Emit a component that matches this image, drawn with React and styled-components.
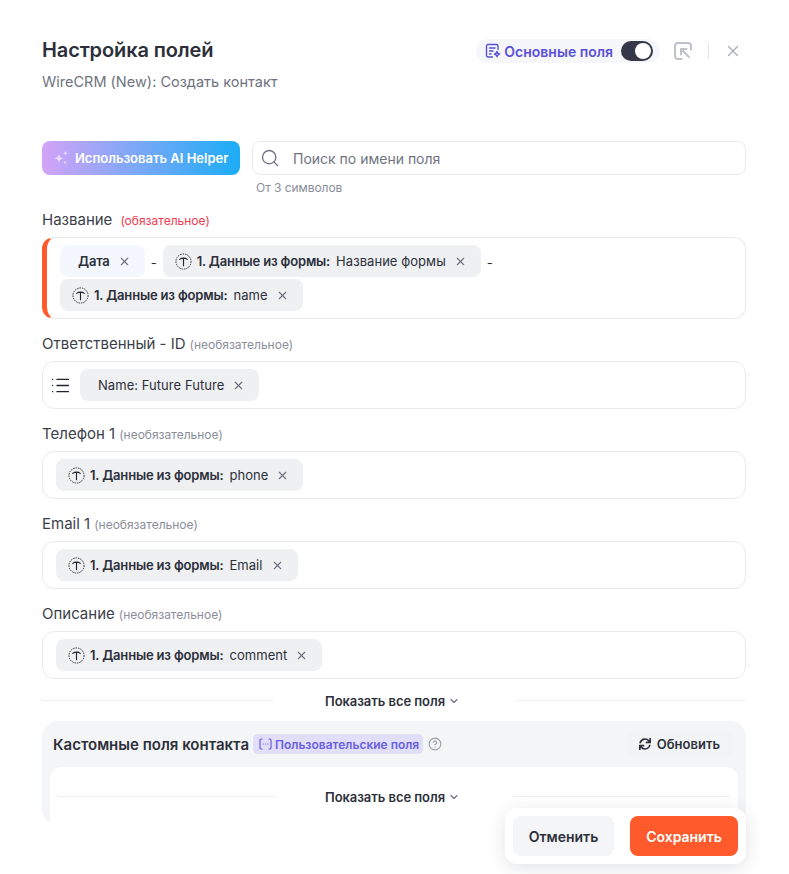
import styled, { createGlobalStyle } from "styled-components";
import { X, Search, List, ChevronDown, CircleHelp } from "lucide-react";
import { FaSync } from "react-icons/fa";

const GlobalStyle = createGlobalStyle`
  html, body {
    margin: 0;
    padding: 0;
    background: #fff;
    font-family: Inter, "Noto Sans", sans-serif;
    color: #2c2f3a;
  }
  * { box-sizing: border-box; }
`;

const FormIcon = () => (
  <svg width="17" height="17" viewBox="0 0 18 18" fill="none" stroke="#22252e">
    <circle cx="9" cy="9" r="8" strokeWidth="1" strokeDasharray="1.6 1" />
    <path d="M5 6.800c1.200-1 2.600-1.400 4-1.400s2.800.4 4 1.400M9 5.400V13.500" strokeWidth="1.200" strokeLinecap="round" />
  </svg>
);

const Chip = ({ title, value, light, icon = true }) => (
  <ChipBox $light={light} $icon={icon}>
    {icon && <FormIcon />}
    {title && <ChipTitle>{title}</ChipTitle>}
    {value && <ChipValue>{value}</ChipValue>}
    <ChipClose><X size={13} strokeWidth={2} /></ChipClose>
  </ChipBox>
);

const Field = ({ label, note, required, children }) => (
  <FieldWrap>
    <Label>
      {label}
      <Note $required={required}>{note}</Note>
    </Label>
    <FieldBox $required={required}>{children}</FieldBox>
  </FieldWrap>
);

const ShowAll = ({ inner }) => (
  <Divider $inner={inner}>
    <DividerLine />
    <DividerText $inner={inner}>Показать все поля <ChevronDown size={12} strokeWidth={2.2} color="#6b7080" /></DividerText>
    <DividerLine />
  </Divider>
);

export default function App() {
  return (
    <Page>
      <GlobalStyle />
      <Header>
        <div>
          <Title>Настройка полей</Title>
          <Subtitle>WireCRM (New): Создать контакт</Subtitle>
        </div>
        <HeaderActions>
          <ModePill>
            <svg width="16" height="16" viewBox="0 0 16 16" fill="none" stroke="#5a50d8" strokeWidth="1.400" strokeLinecap="round" strokeLinejoin="round">
              <path d="M7.500 14H3a1.500 1.500 0 0 1-1.500-1.500V3A1.500 1.500 0 0 1 3 1.500h8.500A1.500 1.500 0 0 1 13 3v3.500" />
              <path d="M4.500 5h5.500M4.500 8h3.500M4.500 11h1.500" />
              <path d="M12 8.500c.3 1.600 1 2.300 2.600 2.600-1.600.3-2.300 1-2.600 2.600-.3-1.600-1-2.300-2.600-2.600 1.600-.3 2.300-1 2.600-2.600z" />
            </svg>
            Основные поля
            <Toggle><Knob /></Toggle>
          </ModePill>
          <IconSlot>
            <svg width="20" height="20" viewBox="0 0 20 20" fill="none" stroke="#bfc2cc" strokeWidth="2" strokeLinecap="round" strokeLinejoin="round">
              <path d="M8.500 18H5a3 3 0 0 1-3-3V5a3 3 0 0 1 3-3h10a3 3 0 0 1 3 3v3.500" />
              <path d="M16 16L8 8M8 13.500V8h5.500" />
            </svg>
          </IconSlot>
          <HeaderSep />
          <X size={18} strokeWidth={1.6} color="#a9adb8" />
        </HeaderActions>
      </Header>

      <SearchRow>
        <AiButton>
          <svg width="16" height="16" viewBox="0 0 16 16" fill="#e9ddff">
            <path d="M6 3.500c.5 3 1.500 4 4.800 4.800C7.500 9 6.500 10 6 13.500 5.500 10 4.500 9 1 8.300 4.500 7.500 5.500 6.500 6 3.500z" />
            <path d="M12.500 .8c.2 1.500.8 2.100 2.500 2.400-1.700.3-2.300.9-2.500 2.400-.2-1.500-.8-2.100-2.500-2.400 1.700-.3 2.300-.9 2.500-2.400z" />
            <path d="M12 10.500c.2 1.300.7 1.800 2 2-1.300.2-1.800.7-2 2-.2-1.300-.7-1.800-2-2 1.300-.2 1.800-.7 2-2z" />
          </svg>
          Использовать AI Helper
        </AiButton>
        <SearchColumn>
          <SearchBox>
            <Search size={20} strokeWidth={1.6} color="#6b7080" />
            <SearchInput placeholder="Поиск по имени поля" />
          </SearchBox>
          <Hint>От 3 символов</Hint>
        </SearchColumn>
      </SearchRow>

      <Field label="Название" note="(обязательное)" required>
        <Chip title="Дата" light icon={false} />
        <Dash>-</Dash>
        <Chip title="1. Данные из формы:" value="Название формы" />
        <Dash>-</Dash>
        <Chip title="1. Данные из формы:" value="name" />
      </Field>
      <Field label="Ответственный - ID" note="(необязательное)">
        <ListIcon><List size={21} strokeWidth={1.6} color="#22252e" /></ListIcon>
        <Chip value="Name: Future Future" icon={false} />
      </Field>
      <Field label="Телефон 1" note="(необязательное)">
        <Chip title="1. Данные из формы:" value="phone" />
      </Field>
      <Field label="Email 1" note="(необязательное)">
        <Chip title="1. Данные из формы:" value="Email" />
      </Field>
      <Field label="Описание" note="(необязательное)">
        <Chip title="1. Данные из формы:" value="comment" />
      </Field>

      <ShowAll />

      <CustomPanel>
        <CustomHeader>
          <CustomTitle>Кастомные поля контакта</CustomTitle>
          <CustomBadge>
            <svg width="13" height="12" viewBox="0 0 13 12" fill="none" stroke="#6a5fe0" strokeWidth="1.200" strokeLinecap="round">
              <path d="M3 1H2.300C1.600 1 1 1.600 1 2.300v7.400C1 10.400 1.600 11 2.300 11H3M10 1h.7c.7 0 1.300.6 1.300 1.300v7.400c0 .7-.6 1.300-1.300 1.300H10" />
              <path d="M4.200 6h.1M6.500 6h.1M8.800 6h.1" />
            </svg>
            Пользовательские поля
          </CustomBadge>
          <CircleHelp size={14} strokeWidth={2} color="#9a9ea9" />
          <RefreshButton><FaSync size={12} />Обновить</RefreshButton>
        </CustomHeader>
        <CustomBody>
          <ShowAll inner />
        </CustomBody>
      </CustomPanel>

      <Footer>
        <CancelButton>Отменить</CancelButton>
        <SaveButton>Сохранить</SaveButton>
      </Footer>
    </Page>
  );
}

const Page = styled.div`
  position: relative;
  width: 789px;
  height: 874px;
  overflow: hidden;
  padding: 38px 43px 0 42px;
`;

const Header = styled.div`
  display: flex;
  justify-content: space-between;
  align-items: flex-start;
  height: 103px;
`;

const Title = styled.div`
  font-size: 20px;
  font-weight: 600;
  line-height: 24px;
  letter-spacing: -0.13px;
  color: #2c2f3a;
`;

const Subtitle = styled.div`
  margin-top: 11px;
  font-size: 14.5px;
  line-height: 17px;
  color: #6f7380;
`;

const HeaderActions = styled.div`
  display: flex;
  align-items: center;
  margin-top: 1px;
  margin-right: 4px;
`;

const ModePill = styled.div`
  display: flex;
  align-items: center;
  gap: 3px;
  height: 24px;
  padding: 0 7px 0 9px;
  border-radius: 12px;
  background: #f6f7fb;
  font-size: 14px;
  font-weight: 600;
  color: #5a50d8;
`;

const Toggle = styled.div`
  display: flex;
  justify-content: flex-end;
  align-items: center;
  width: 32px;
  height: 20px;
  margin-left: 5px;
  padding: 2px;
  border-radius: 10px;
  background: #343849;
`;

const Knob = styled.div`
  width: 16px;
  height: 16px;
  border-radius: 50%;
  background: #fff;
`;

const IconSlot = styled.div`
  display: flex;
  margin-left: 13px;
`;

const HeaderSep = styled.div`
  width: 1px;
  height: 16px;
  margin: 0 15px;
  background: #e4e5ea;
`;

const SearchRow = styled.div`
  display: flex;
  gap: 12px;
`;

const AiButton = styled.button`
  display: flex;
  align-items: center;
  gap: 6px;
  width: 198px;
  height: 34px;
  padding: 0 0 0 11px;
  border: 0;
  border-radius: 8px;
  background: linear-gradient(90deg, #d3a3f8, #1badf6);
  color: #fff;
  font-family: inherit;
  font-size: 13px;
  font-weight: 600;
`;

const SearchColumn = styled.div`
  flex: 1;
`;

const SearchBox = styled.div`
  display: flex;
  align-items: center;
  gap: 13px;
  height: 34px;
  padding: 0 7px;
  border: 1px solid #e8e9ed;
  border-radius: 8px;
`;

const SearchInput = styled.input`
  flex: 1;
  border: 0;
  outline: 0;
  padding: 0;
  font-family: inherit;
  font-size: 14px;
  color: #2c2f3a;
  &::placeholder { color: #6f7380; opacity: 1; }
`;

const Hint = styled.div`
  margin: 5px 0 0 4px;
  font-size: 12px;
  line-height: 15px;
  letter-spacing: -0.05px;
  color: #8a8e9a;
`;

const FieldWrap = styled.div`
  margin-top: 16px;
`;

const Label = styled.div`
  display: flex;
  align-items: baseline;
  gap: 4px;
  height: 18px;
  margin-bottom: 8px;
  font-size: 15px;
  line-height: 18px;
  color: #3c3f4a;
`;

const Note = styled.span`
  font-size: 12px;
  margin-left: ${(p) => (p.$required ? "4px" : "0")};
  color: ${(p) => (p.$required ? "#f0384e" : "#8a8e9a")};
`;

const FieldBox = styled.div`
  display: flex;
  flex-wrap: wrap;
  align-items: center;
  gap: 2px 0;
  min-height: 48px;
  padding: 7px 13px;
  border: 1px solid #e8e9ed;
  border-radius: 12px;
  ${(p) => p.$required && "border-left: 5px solid #fe5a2b; padding-left: 13px;"}
`;

const ChipBox = styled.div`
  display: flex;
  align-items: center;
  height: 32px;
  padding: 0 14px 0 ${(p) => (p.$icon ? "12px" : "18px")};
  border-radius: 8px;
  background: ${(p) => (p.$light ? "#f4f7fe" : "#eff0f2")};
  font-size: 13px;
  color: #2c2f3a;
`;

const ChipTitle = styled.span`
  font-weight: 600;
  letter-spacing: -0.17px;
  svg + & { margin-left: 5px; }
`;

const ChipValue = styled.span`
  letter-spacing: 0.05px;
  ${ChipTitle} + & { margin-left: 6px; }
  svg + & { margin-left: 5px; }
`;

const ChipClose = styled.span`
  display: flex;
  margin-left: 8px;
  color: #6b7080;
`;

const Dash = styled.span`
  width: 18px;
  margin-top: 4px;
  text-align: center;
  font-size: 13px;
  color: #2c2f3a;
`;

const ListIcon = styled.span`
  display: flex;
  margin: 0 9px 0 -6px;
`;

const Divider = styled.div`
  display: flex;
  align-items: center;
  height: 19px;
  margin: ${(p) => (p.$inner ? "20px 8px 0" : "12px 0 11px")};
`;

const DividerLine = styled.div`
  flex: 1;
  height: 1px;
  background: #eceef0;
`;

const DividerText = styled.div`
  display: flex;
  align-items: center;
  justify-content: center;
  gap: 3px;
  width: ${(p) => (p.$inner ? "236px" : "243px")};
  padding-right: 3px;
  font-size: 13px;
  font-weight: 600;
  letter-spacing: -0.05px;
  color: #2c2f3a;
`;

const CustomPanel = styled.div`
  height: 104px;
  padding: 0 0 0 8px;
  border-radius: 16px;
  background: #f4f5f7;
  overflow: hidden;
`;

const CustomHeader = styled.div`
  display: flex;
  align-items: center;
  height: 46px;
  padding: 0 12px 0 3px;
`;

const CustomTitle = styled.div`
  font-size: 15px;
  font-weight: 600;
  color: #2c2f3a;
`;

const CustomBadge = styled.div`
  display: flex;
  align-items: center;
  gap: 3px;
  height: 20px;
  margin: 0 5px 0 4px;
  padding: 0 4px 0 6px;
  border-radius: 5px;
  background: #e0def8;
  font-size: 12px;
  font-weight: 600;
  color: #6a5fe0;
`;

const RefreshButton = styled.button`
  display: flex;
  align-items: center;
  gap: 6px;
  height: 28px;
  margin-left: auto;
  padding: 0 14px 0 13px;
  border: 0;
  border-radius: 8px;
  background: #f2f3f5;
  font-family: inherit;
  font-size: 13px;
  font-weight: 600;
  color: #2c2f3a;
`;

const CustomBody = styled.div`
  height: 70px;
  margin-right: 8px;
  border-radius: 12px;
  background: #fff;
  overflow: hidden;
`;

const Footer = styled.div`
  position: absolute;
  left: 505px;
  top: 808px;
  display: flex;
  gap: 16px;
  width: 241px;
  height: 56px;
  padding: 8px;
  border-radius: 12px;
  background: #fff;
  box-shadow: 0 4px 18px rgba(30, 35, 60, 0.13);
`;

const CancelButton = styled.button`
  width: 101px;
  height: 40px;
  border: 0;
  border-radius: 8px;
  background: #f4f5f7;
  font-family: inherit;
  font-size: 14px;
  font-weight: 600;
  color: #2c2f3a;
`;

const SaveButton = styled.button`
  width: 108px;
  height: 40px;
  border: 0;
  border-radius: 8px;
  background: #fe5a2b;
  font-family: inherit;
  font-size: 14px;
  font-weight: 600;
  color: #fff;
`;
